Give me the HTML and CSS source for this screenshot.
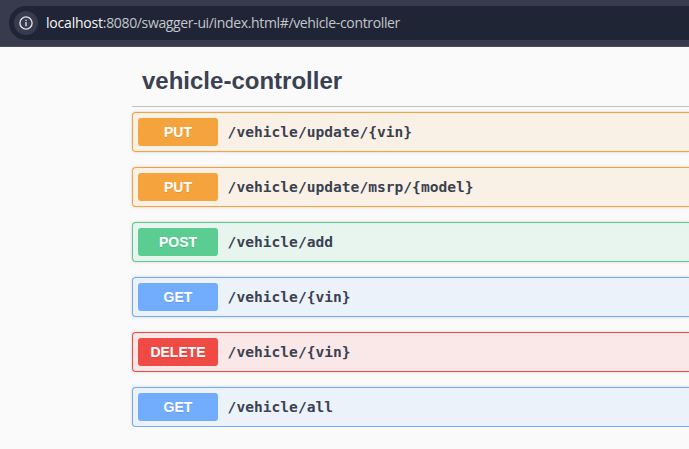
FILE: index.html
```html
<!DOCTYPE html>
<html lang="en">
<head>
<meta charset="utf-8">
<title>Swagger UI</title>
<link rel="stylesheet" href="styles.css">
</head>
<body>
<header class="toolbar">
  <div class="address">
    <span class="info">
      <svg width="14" height="14" viewBox="0 0 14 14" fill="none" stroke="currentColor" stroke-width="1.4"><circle cx="7" cy="7" r="6.1"/><path d="M7 6.1v4.1M7 3.7v1.4"/></svg>
    </span>
    <span class="url"><span class="host">localhost</span>:8080/swagger-ui/index.html#/vehicle-controller</span>
  </div>
</header>
<main class="api">
  <h3 class="tag">vehicle-controller</h3>
  <div class="operations">
    <div class="op put"><span class="method">PUT</span><span class="path">/vehicle/update/{vin}</span></div>
    <div class="op put"><span class="method">PUT</span><span class="path">/vehicle/update/msrp/{model}</span></div>
    <div class="op post"><span class="method">POST</span><span class="path">/vehicle/add</span></div>
    <div class="op get"><span class="method">GET</span><span class="path">/vehicle/{vin}</span></div>
    <div class="op delete"><span class="method">DELETE</span><span class="path">/vehicle/{vin}</span></div>
    <div class="op get"><span class="method">GET</span><span class="path">/vehicle/all</span></div>
  </div>
</main>
</body>
</html>
```
FILE: styles.css
```css
* { box-sizing: border-box; }
body {
  margin: 0;
  background: #fafafa;
  color: #3b4151;
  font-family: "Liberation Sans", sans-serif;
  overflow: hidden;
}
.toolbar {
  height: 47px;
  padding: 6px 0 0 9px;
  background: #373b4d;
  border-bottom: 1px solid #4b4d57;
}
.address {
  display: flex;
  align-items: center;
  height: 34px;
  padding-left: 5px;
  border-radius: 17px 0 0 17px;
  background: #1f2534;
}
.info {
  display: flex;
  align-items: center;
  justify-content: center;
  width: 24px;
  height: 24px;
  border-radius: 50%;
  background: #373b4d;
  color: #dcdfe6;
}
.url {
  margin-left: 8px;
  font: 14px/20px "Open Sans", sans-serif;
  letter-spacing: -0.35px;
  white-space: nowrap;
  color: #c3c6ce;
}
.host {
  letter-spacing: -0.2px;
  color: #f4f5f7;
}
.api { padding: 13px 0 0 132px; }
.tag {
  height: 47px;
  margin: 0 0 5px;
  padding-left: 10px;
  border-bottom: 1px solid rgba(59, 65, 81, .3);
  font-size: 24px;
  line-height: 42px;
}
.operations {
  display: grid;
  gap: 15px;
}
.op {
  display: flex;
  align-items: center;
  height: 40px;
  padding: 5px;
  border: 1px solid var(--color);
  border-right: 0;
  border-radius: 4px 0 0 4px;
  background: var(--tint);
  box-shadow: 0 0 3px rgba(0, 0, 0, .19);
}
.put { --color: #f5a33c; --tint: #faf1e6; }
.post { --color: #5bcc92; --tint: #e8f5ef; }
.get { --color: #72acfd; --tint: #ebf2fa; }
.delete { --color: #ef4a44; --tint: #f9e8e7; }
.method {
  width: 80px;
  height: 28px;
  border-radius: 3px;
  background: var(--color);
  color: #fff;
  font-size: 14px;
  font-weight: 700;
  line-height: 28px;
  text-align: center;
  text-shadow: 0 1px 0 rgba(0, 0, 0, .1);
}
.path {
  padding-left: 9.6px;
  font: 700 14.6px/20px "DejaVu Sans Mono", monospace;
  white-space: nowrap;
}
```
